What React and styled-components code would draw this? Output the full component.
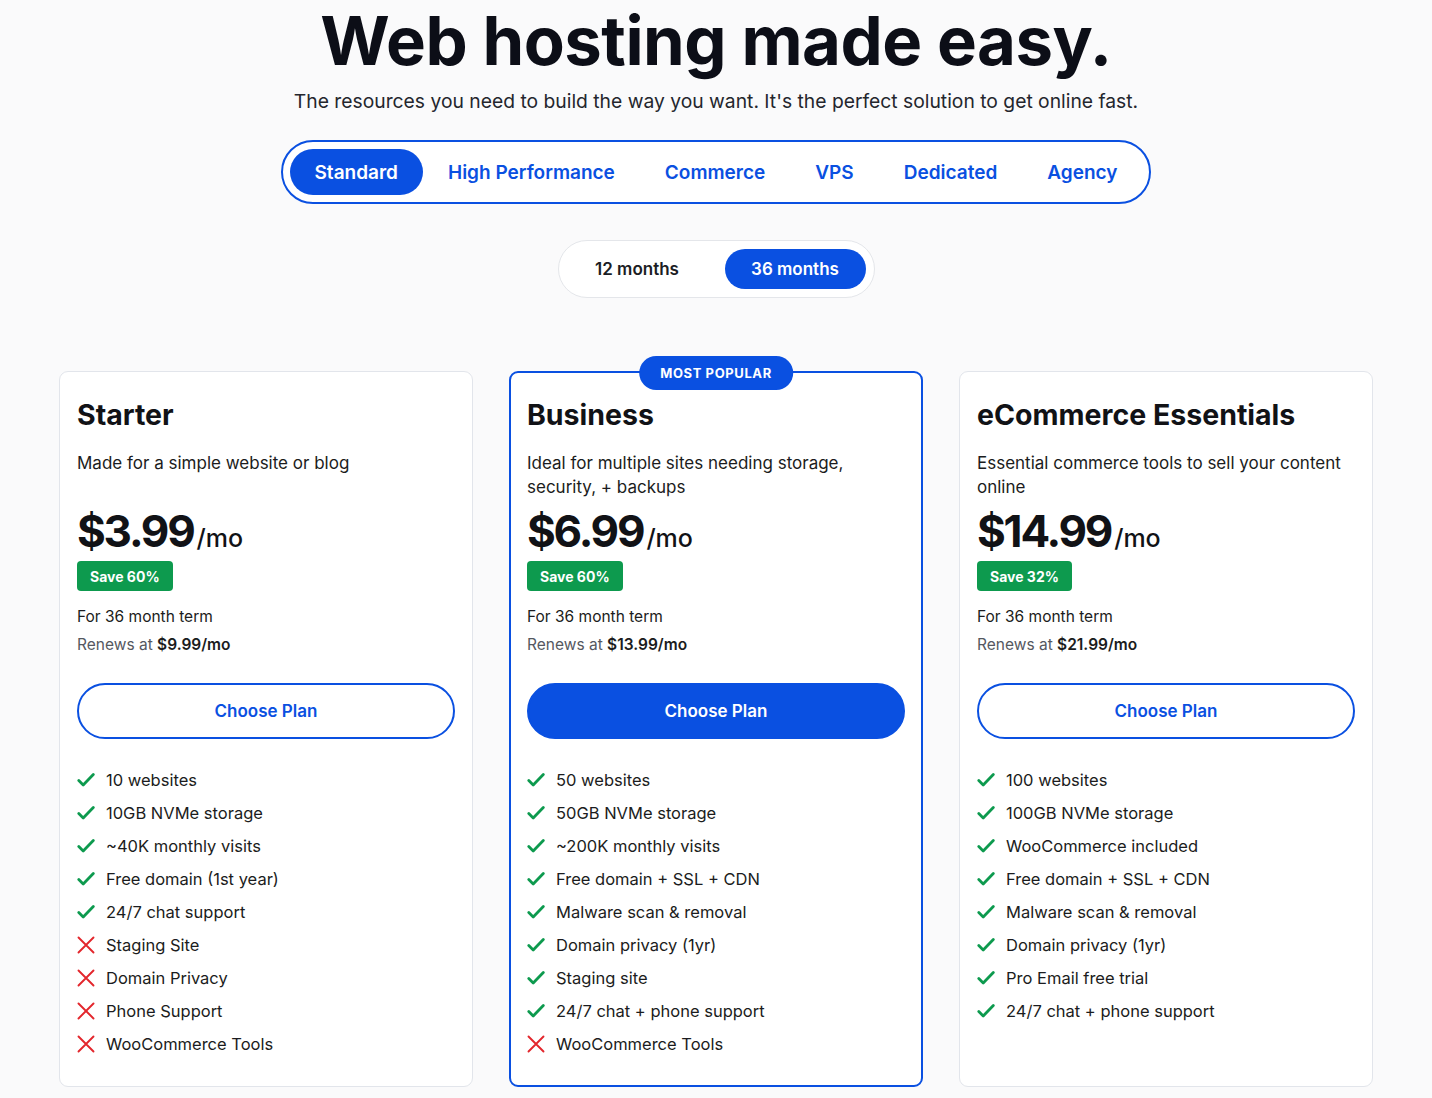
import React, { useState } from "react"
import styled, { createGlobalStyle, css } from "styled-components"

const BLUE = "#0a50e1"
const GREEN = "#0d9a4e"
const RED = "#e3262c"

const GlobalStyle = createGlobalStyle`
  body {
    margin: 0;
    background: #fafafb;
    font-family: "Inter", "Noto Sans", sans-serif;
    color: #15161a;
  }
`

const categories = ["Standard", "High Performance", "Commerce", "VPS", "Dedicated", "Agency"]

const plans = [
  {
    name: "Starter",
    desc: "Made for a simple website or blog",
    price: "$3.99",
    save: "Save 60%",
    renew: "$9.99/mo",
    features: [
      ["10 websites", true],
      ["10GB NVMe storage", true],
      ["~40K monthly visits", true],
      ["Free domain (1st year)", true],
      ["24/7 chat support", true],
      ["Staging Site", false],
      ["Domain Privacy", false],
      ["Phone Support", false],
      ["WooCommerce Tools", false],
    ],
  },
  {
    name: "Business",
    desc: "Ideal for multiple sites needing storage, security, + backups",
    price: "$6.99",
    save: "Save 60%",
    renew: "$13.99/mo",
    featured: true,
    features: [
      ["50 websites", true],
      ["50GB NVMe storage", true],
      ["~200K monthly visits", true],
      ["Free domain + SSL + CDN", true],
      ["Malware scan & removal", true],
      ["Domain privacy (1yr)", true],
      ["Staging site", true],
      ["24/7 chat + phone support", true],
      ["WooCommerce Tools", false],
    ],
  },
  {
    name: "eCommerce Essentials",
    desc: "Essential commerce tools to sell your content online",
    price: "$14.99",
    save: "Save 32%",
    renew: "$21.99/mo",
    features: [
      ["100 websites", true],
      ["100GB NVMe storage", true],
      ["WooCommerce included", true],
      ["Free domain + SSL + CDN", true],
      ["Malware scan & removal", true],
      ["Domain privacy (1yr)", true],
      ["Pro Email free trial", true],
      ["24/7 chat + phone support", true],
    ],
  },
]

const CheckIcon = () => (
  <svg width="18" height="16" viewBox="0 0 18 16">
    <path d="M1.8 8.6l4.4 4.4L16.3 2.6" fill="none" stroke={GREEN} strokeWidth="2.8" strokeLinecap="round" strokeLinejoin="round" />
  </svg>
)

const CrossIcon = () => (
  <svg width="18" height="18" viewBox="0 0 18 18">
    <path d="M1.5 1.5l15 15M16.5 1.5l-15 15" fill="none" stroke={RED} strokeWidth="1.9" strokeLinecap="round" />
  </svg>
)

const App = () => {
  const [category, setCategory] = useState("Standard")
  const [term, setTerm] = useState("36")

  return (
    <Page>
      <GlobalStyle />
      <Title>Web hosting made easy.</Title>
      <Subtitle>The resources you need to build the way you want. It's the perfect solution to get online fast.</Subtitle>

      <CategoryBar>
        {categories.map(c => (
          <CategoryTab key={c} active={c === category} onClick={() => setCategory(c)}>{c}</CategoryTab>
        ))}
      </CategoryBar>

      <TermToggle>
        <TermTab active={term === "12"} onClick={() => setTerm("12")}>12 months</TermTab>
        <TermTab active={term === "36"} onClick={() => setTerm("36")}>36 months</TermTab>
      </TermToggle>

      <Cards>
        {plans.map(plan => (
          <Card key={plan.name} featured={plan.featured}>
            {plan.featured && <PopularBadge>Most Popular</PopularBadge>}
            <PlanName>{plan.name}</PlanName>
            <PlanDesc>{plan.desc}</PlanDesc>
            <Price>{plan.price}<PerMonth>/mo</PerMonth></Price>
            <SaveBadge>{plan.save}</SaveBadge>
            <Term>For 36 month term</Term>
            <Renew>Renews at <strong>{plan.renew}</strong></Renew>
            <ChooseButton featured={plan.featured}>Choose Plan</ChooseButton>
            <Features>
              {plan.features.map(([label, ok]) => (
                <Feature key={label}>
                  <IconBox>{ok ? <CheckIcon /> : <CrossIcon />}</IconBox>
                  {label}
                </Feature>
              ))}
            </Features>
          </Card>
        ))}
      </Cards>
    </Page>
  )
}

export default App

const Page = styled.div`
  min-height: 100vh;
  display: flex;
  flex-direction: column;
  align-items: center;
  padding-bottom: 10px;
  box-sizing: border-box;
`

const Title = styled.h1`
  margin: 0;
  font-size: 67px;
  line-height: 81px;
  font-weight: 700;
  letter-spacing: -0.5px;
  color: #0c0e17;
`

const Subtitle = styled.p`
  margin: 6px 0 0;
  font-size: 19.3px;
  line-height: 28px;
  color: #24262d;
`

const CategoryBar = styled.div`
  margin-top: 25px;
  display: flex;
  padding: 7px;
  border: 2px solid ${BLUE};
  border-radius: 999px;
  background: #fff;
`

const CategoryTab = styled.button`
  border: none;
  background: ${p => (p.active ? BLUE : "transparent")};
  color: ${p => (p.active ? "#fff" : BLUE)};
  font-family: inherit;
  font-size: 19px;
  font-weight: 600;
  height: 46px;
  padding: 0 25px;
  border-radius: 999px;
  cursor: pointer;
`

const TermToggle = styled.div`
  margin-top: 36px;
  display: flex;
  gap: 17px;
  padding: 8px;
  border: 1px solid #e4e6ea;
  border-radius: 999px;
  background: #fff;
`

const TermTab = styled.button`
  width: 141px;
  height: 40px;
  border: none;
  border-radius: 999px;
  background: ${p => (p.active ? BLUE : "transparent")};
  color: ${p => (p.active ? "#fff" : "#1b1d24")};
  font-family: inherit;
  font-size: 17px;
  font-weight: 600;
  cursor: pointer;
`

const Cards = styled.div`
  margin-top: 73px;
  display: grid;
  grid-template-columns: repeat(3, 414px);
  gap: 36px;
`

const Card = styled.div`
  position: relative;
  height: 716px;
  box-sizing: border-box;
  padding: 25px 17px 0;
  background: #fff;
  border: 1px solid #e2e5eb;
  border-radius: 9px;
  display: flex;
  flex-direction: column;
  align-items: flex-start;

  ${p => p.featured && css`
    border: 2px solid ${BLUE};
    padding: 24px 16px 0;
  `}
`

const PopularBadge = styled.div`
  position: absolute;
  top: -17px;
  left: 50%;
  transform: translateX(-50%);
  height: 34px;
  padding: 0 21px;
  display: flex;
  align-items: center;
  background: ${BLUE};
  color: #fff;
  border-radius: 999px;
  font-size: 13px;
  font-weight: 700;
  letter-spacing: 0.6px;
  text-transform: uppercase;
`

const PlanName = styled.h2`
  margin: 0;
  font-size: 28.5px;
  line-height: 36px;
  font-weight: 700;
  color: #111216;
`

const PlanDesc = styled.p`
  margin: 18px 0 0;
  min-height: 48px;
  font-size: 17px;
  line-height: 24px;
  color: #1b1c20;
`

const Price = styled.div`
  margin-top: 10px;
  font-size: 44px;
  line-height: 44px;
  font-weight: 700;
  letter-spacing: -2.2px;
  color: #111216;
`

const PerMonth = styled.span`
  margin-left: 3px;
  font-size: 25px;
  font-weight: 500;
  letter-spacing: 0;
`

const SaveBadge = styled.div`
  margin-top: 1px;
  height: 30px;
  padding: 0 13px;
  display: flex;
  align-items: center;
  background: ${GREEN};
  color: #fff;
  border-radius: 4px;
  font-size: 14px;
  font-weight: 700;
`

const Term = styled.div`
  margin-top: 15px;
  font-size: 15.5px;
  line-height: 22px;
  color: #1b1c20;
`

const Renew = styled.div`
  margin-top: 6px;
  font-size: 15.5px;
  line-height: 22px;
  color: #555861;

  strong {
    font-weight: 600;
    color: #1b1c20;
  }
`

const ChooseButton = styled.button`
  margin-top: 27px;
  width: 100%;
  height: 56px;
  border-radius: 999px;
  border: 2px solid ${BLUE};
  background: ${p => (p.featured ? BLUE : "#fff")};
  color: ${p => (p.featured ? "#fff" : BLUE)};
  font-family: inherit;
  font-size: 17px;
  font-weight: 600;
  cursor: pointer;
`

const Features = styled.ul`
  margin: 24px 0 0;
  padding: 0;
  list-style: none;
`

const Feature = styled.li`
  display: flex;
  align-items: center;
  gap: 11px;
  height: 33px;
  font-size: 16.5px;
  color: #1b1c20;
`

const IconBox = styled.span`
  display: flex;
  width: 18px;
  justify-content: center;
`
